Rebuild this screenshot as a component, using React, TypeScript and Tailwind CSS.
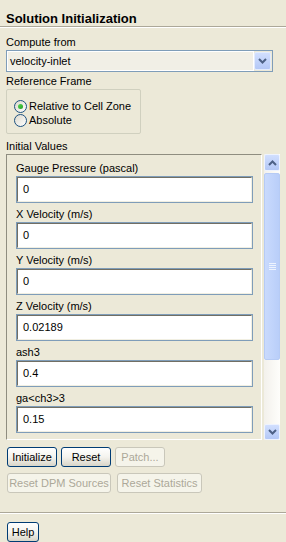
import React from 'react';

const fields = [
  { label: 'Gauge Pressure (pascal)', value: '0' },
  { label: 'X Velocity (m/s)', value: '0' },
  { label: 'Y Velocity (m/s)', value: '0' },
  { label: 'Z Velocity (m/s)', value: '0.02189' },
  { label: 'ash3', value: '0.4' },
  { label: 'ga<ch3>3', value: '0.15' },
];

function Btn({ label, w, disabled }: { label: string; w: string; disabled?: boolean }) {
  if (disabled) {
    return (
      <div className={`${w} h-[20px] flex items-center justify-center rounded-[3px] border border-[#C9C7BA] bg-[#F5F4EA] text-[#ACA899] whitespace-nowrap`}>
        {label}
      </div>
    );
  }
  return (
    <div className={`${w} h-[20px] flex items-center justify-center rounded-[3px] border border-[#003C74] bg-linear-to-b from-white via-[#F4F3EE] to-[#D8D5C8] text-black`}>
      {label}
    </div>
  );
}

function Radio({ checked, label }: { checked?: boolean; label: string }) {
  return (
    <div className="flex items-center h-[14px]">
      <div className="w-[13px] h-[13px] rounded-full border border-[#1C5180] bg-linear-to-br from-[#DCD9CD] to-white flex items-center justify-center">
        {checked && <div className="w-[5px] h-[5px] rounded-full bg-linear-to-br from-[#55D651] to-[#21A121]" />}
      </div>
      <span className="ml-[2px]">{label}</span>
    </div>
  );
}

function Chevron({ up }: { up?: boolean }) {
  return (
    <svg width="9" height="6" viewBox="0 0 9 6">
      <polyline
        points={up ? '1,5 4.5,1.5 8,5' : '1,1 4.5,4.5 8,1'}
        fill="none"
        stroke="#4D6185"
        strokeWidth="2"
      />
    </svg>
  );
}

export default function App() {
  return (
    <div className="w-[286px] h-[542px] bg-[#ECE9D8] flex flex-col text-[11px] leading-[13px] text-black font-['Liberation_Sans',Arial,sans-serif] overflow-hidden">
      <div className="h-[27px] px-[6px] pt-[11px] text-[13px] leading-[15px] font-bold">Solution Initialization</div>
      <div className="h-px bg-[#ACA899]" />
      <div className="h-px bg-white" />

      <div className="px-[6px] pt-[8px] flex flex-col">
        <div className="h-[14px]">Compute from</div>
        <div className="w-[267px] h-[22px] border border-[#7F9DB9] flex">
          <div className="flex-1 border border-white bg-[#F1EFE6] flex items-center pl-[2px]">velocity-inlet</div>
          <div className="w-[17px] my-[1px] mr-[1px] rounded-[2px] border border-[#E3ECFD] bg-linear-to-b from-[#D1DFFE] to-[#B4C8F6] flex items-center justify-center">
            <Chevron />
          </div>
        </div>

        <div className="h-[14px] mt-[3px]">Reference Frame</div>
        <div className="w-[135px] h-[45px] rounded-[2px] border border-[#D0D0BF] pl-[7px] pt-[9px] flex flex-col">
          <Radio checked label="Relative to Cell Zone" />
          <Radio label="Absolute" />
        </div>

        <div className="h-[14px] mt-[6px] leading-[12px]">Initial Values</div>
        <div className="flex gap-[2px] h-[286px]">
          <div className="w-[256px] border-t border-l border-[#8F8D80] border-r-white border-b-white border-r border-b overflow-hidden pl-[9px] pt-[7px] flex flex-col gap-[5px]">
            {fields.map((f) => (
              <div key={f.label} className="flex flex-col">
                <div className="h-[14px]">{f.label}</div>
                <div className="w-[237px] h-[27px] border border-[#7F9DB9] shrink-0">
                  <div className="h-full border-t border-l border-[#716F64] border-r-[#F1EFE2] border-b-[#F1EFE2] border-r border-b bg-white flex items-center pl-[5px]">
                    {f.value}
                  </div>
                </div>
              </div>
            ))}
          </div>
          <div className="w-[16px] flex flex-col bg-linear-to-r from-[#F3F1EC] to-[#FEFEFB]">
            <div className="h-[17px] rounded-[2px] border border-[#EEF3FE] bg-linear-to-b from-[#D1DFFE] to-[#B4C8F6] flex items-center justify-center">
              <Chevron up />
            </div>
            <div className="h-[187px] mt-[2px] rounded-[2px] border border-[#B6CBF5] bg-linear-to-r from-[#C9DAFD] to-[#B9CEF9] flex items-center justify-center">
              <div className="flex flex-col gap-[1px]">
                <div className="w-[7px] h-px bg-[#EEF4FE]" />
                <div className="w-[7px] h-px bg-[#EEF4FE]" />
                <div className="w-[7px] h-px bg-[#EEF4FE]" />
                <div className="w-[7px] h-px bg-[#EEF4FE]" />
              </div>
            </div>
            <div className="flex-1" />
            <div className="h-[16px] rounded-[2px] border border-[#EEF3FE] bg-linear-to-b from-[#D1DFFE] to-[#B4C8F6] flex items-center justify-center">
              <Chevron />
            </div>
          </div>
        </div>
      </div>

      <div className="pl-[7px] pt-[7px] flex flex-col gap-[6px]">
        <div className="flex gap-[4px]">
          <Btn label="Initialize" w="w-[50px]" />
          <Btn label="Reset" w="w-[50px]" />
          <Btn label="Patch..." w="w-[50px]" disabled />
        </div>
        <div className="flex gap-[6px]">
          <Btn label="Reset DPM Sources" w="w-[104px]" disabled />
          <Btn label="Reset Statistics" w="w-[85px]" disabled />
        </div>
      </div>

      <div className="mt-[19px] h-px bg-[#ACA899]" />
      <div className="h-px bg-white" />
      <div className="pl-[7px] pt-[8px]">
        <Btn label="Help" w="w-[32px]" />
      </div>
    </div>
  );
}
